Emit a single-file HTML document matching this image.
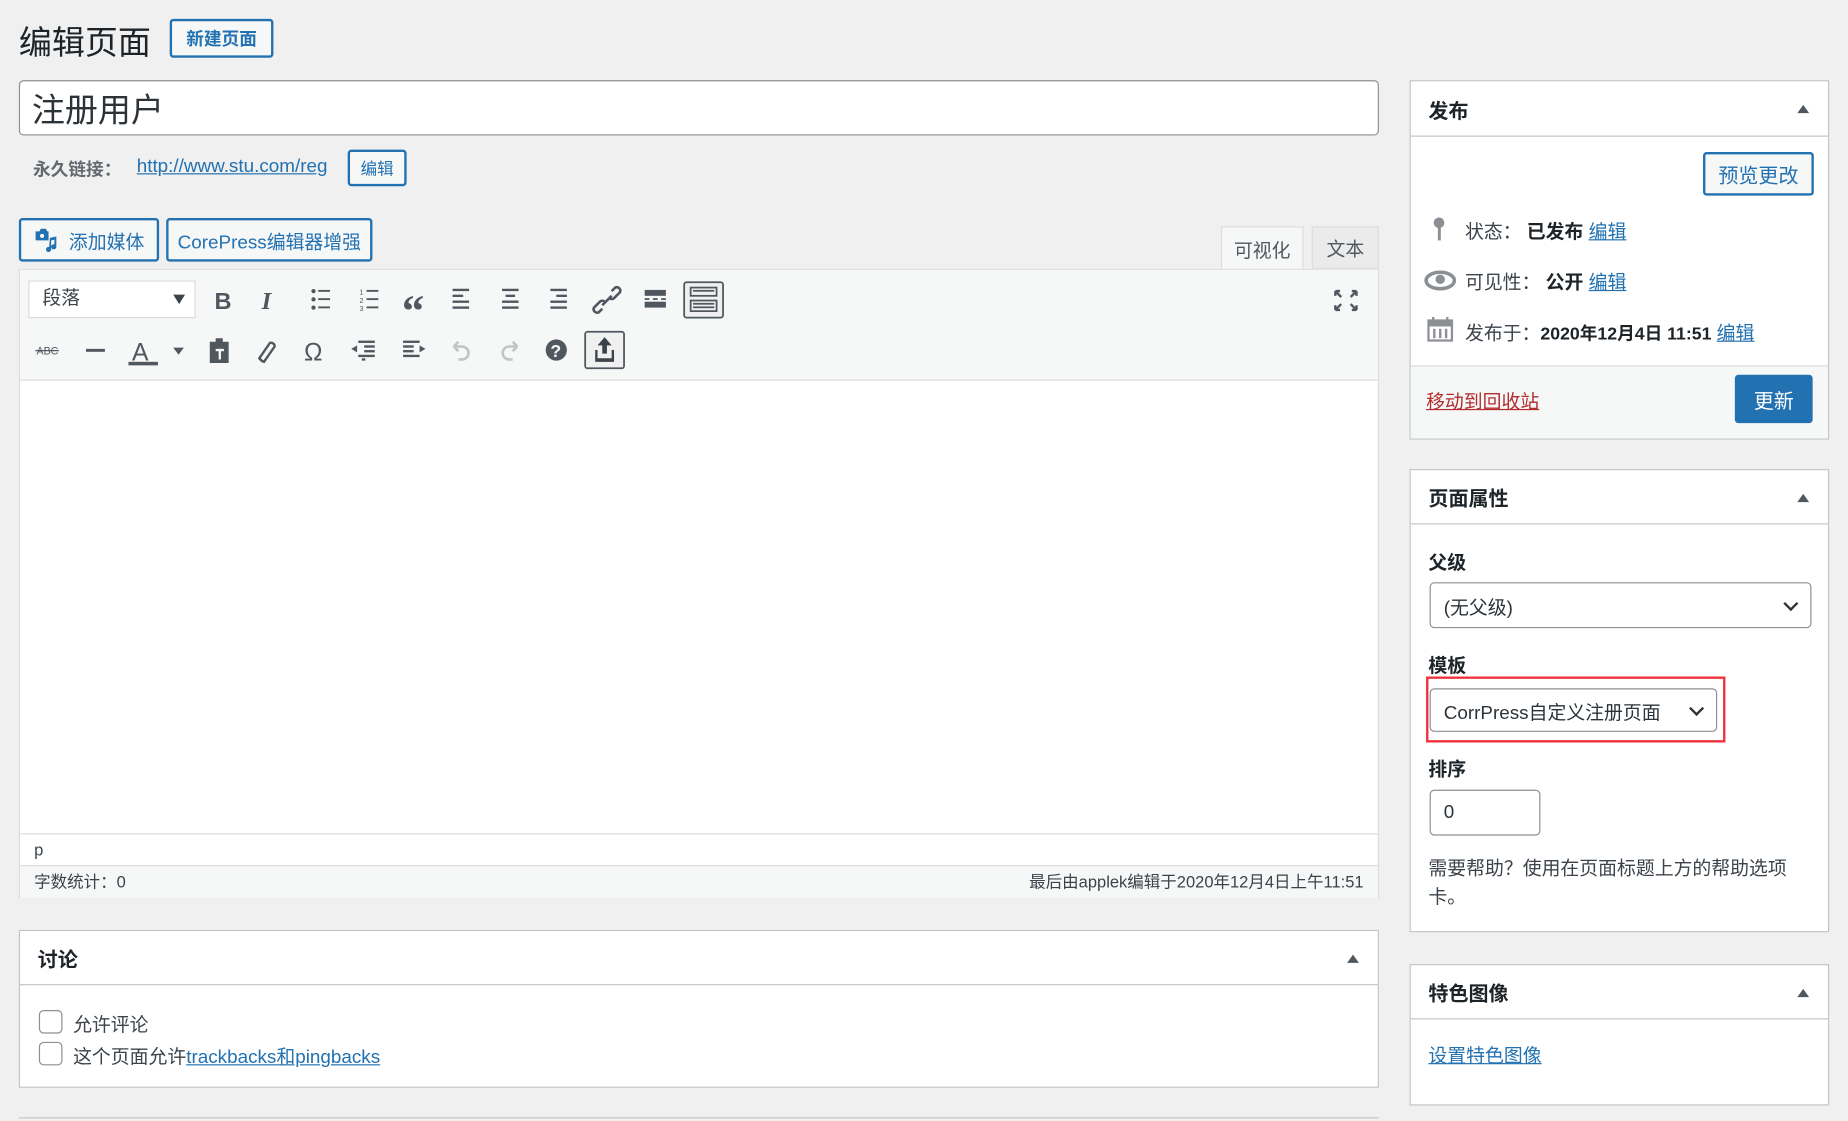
<!DOCTYPE html>
<html><head><meta charset="utf-8"><style>
*{box-sizing:border-box;margin:0;padding:0}
html,body{width:1848px;height:1120px;overflow:hidden;background:#f0f0f1}
#w{position:absolute;left:0;top:0;width:1568px;height:951px;transform:scale(1.17857);transform-origin:0 0;font-family:"Liberation Sans","Noto Sans CJK SC",sans-serif;color:#3c434a;font-size:16px}
.a{position:absolute}
.btn{position:absolute;border:2px solid #2271b1;border-radius:3px;color:#2271b1;background:#f6f7f7;display:flex;align-items:center;justify-content:center;font-size:16px}
.box{position:absolute;background:#fff;border:1px solid #c3c4c7}
.hd{position:absolute;left:0;right:0;top:0;border-bottom:1px solid #c3c4c7;font-weight:bold;font-size:17px;color:#1d2327;padding-left:15px;display:flex;align-items:center}
.tri{position:absolute;right:16px;width:0;height:0;border-left:5px solid transparent;border-right:5px solid transparent;border-bottom:7px solid #50575e}
a,.lk{color:#2271b1;text-decoration:underline}
.sel{position:absolute;border:1px solid #8c8f94;border-radius:4px;background:#fff;font-size:16px;color:#2c3338;display:flex;align-items:center;padding-left:11px}
.chev{position:absolute;right:12px;top:50%;width:9px;height:9px;border-right:2px solid #2c3338;border-bottom:2px solid #2c3338;transform:translateY(-70%) rotate(45deg)}
.cb{position:absolute;width:20px;height:20px;border:1.5px solid #8c8f94;border-radius:4px;background:#fff}
</style></head><body><div id="w">

<div class="a" style="left:16px;top:15px;font-size:28px;color:#1d2327">编辑页面</div>
<div class="btn" style="left:144px;top:16px;width:88px;height:33px;font-weight:bold;font-size:15px;color:#2271b1">新建页面</div>

<div class="a" style="left:16px;top:68px;width:1154px;height:47px;background:#fff;border:1px solid #8c8f94;border-radius:4px;font-size:28px;color:#2c3338;padding-left:10px;line-height:50px">注册用户</div>

<div class="a" style="left:28px;top:133px;font-weight:bold;font-size:15px;color:#646970">永久链接：</div>
<a class="a" style="left:116px;top:133px;font-size:16px">http://www.stu.com/reg</a>
<div class="btn" style="left:295px;top:127px;width:50px;height:31px;font-size:14px">编辑</div>

<div class="btn" style="left:16px;top:185px;width:119px;height:37px">
<svg width="22" height="22" viewBox="0 0 20 20" style="margin-right:8px"><path fill="#2271b1" d="M2 3h3l1-2h4l1 2h1v7H2z"/><path fill="#2271b1" d="M13 8l5-1v8a2 2 0 1 1-1.5-2V9.5L14 10v7a2 2 0 1 1-1.5-2z" /><circle cx="7" cy="6.5" r="1.6" fill="#f6f7f7"/></svg>添加媒体</div>
<div class="btn" style="left:141px;top:185px;width:175px;height:37px">CorePress编辑器增强</div>

<div class="a" style="left:1036px;top:192px;width:70px;height:37px;background:#f6f7f7;border:1px solid #dcdcde;border-bottom:none;display:flex;align-items:center;justify-content:center;color:#50575e">可视化</div>
<div class="a" style="left:1113px;top:192px;width:57px;height:36px;background:#ebebeb;border:1px solid #dcdcde;display:flex;align-items:center;justify-content:center;color:#50575e">文本</div>

<div class="a" style="left:16px;top:228px;width:1154px;height:534px;border:1px solid #dcdcde;background:#fff;box-shadow:0 1px 1px rgba(0,0,0,.04)">
 <div class="a" style="left:0;top:0;right:0;height:94px;background:#f6f7f7;border-bottom:1px solid #dcdcde"></div>
 <div class="a" style="left:0;top:478px;right:0;height:27px;border-top:1px solid #dcdcde;padding-left:12px;font-size:14px;line-height:26px;color:#3c434a">p</div>
 <div class="a" style="left:0;top:505px;right:0;height:28px;background:#f6f7f7;border-top:1px solid #dcdcde;font-size:14px;line-height:26px;padding:0 12px;color:#3c434a"><span>字数统计：0</span><span style="float:right">最后由applek编辑于2020年12月4日上午11:51</span></div>
</div>

<div class="a" style="left:24px;top:238px;width:142px;height:32px;background:#fff;border:1px solid #dcdcde;font-size:16px;line-height:30px;padding-left:11px;color:#3c434a">段落<span style="position:absolute;right:8px;top:11px;border-left:5px solid transparent;border-right:5px solid transparent;border-top:8px solid #3c434a"></span></div>
<svg class="a" style="left:0;top:0" width="1180" height="330">
<g fill="#50575e" stroke="none" font-family="Liberation Sans">
<text x="182" y="262" font-weight="bold" font-size="20">B</text>
<text x="222" y="262" font-style="italic" font-weight="bold" font-size="21" font-family="Liberation Serif">I</text>
<circle cx="266" cy="247" r="1.8"/><circle cx="266" cy="254" r="1.8"/><circle cx="266" cy="261" r="1.8"/>
<rect x="270" y="246" width="10" height="1.6"/><rect x="270" y="253" width="10" height="1.6"/><rect x="270" y="260" width="10" height="1.6"/>
<text x="305" y="250" font-size="6">1</text><text x="305" y="257" font-size="6">2</text><text x="305" y="264" font-size="6">3</text>
<rect x="311" y="246" width="10" height="1.6"/><rect x="311" y="253" width="10" height="1.6"/><rect x="311" y="260" width="10" height="1.6"/>
<text x="341" y="276" font-size="38" font-weight="bold" font-family="Liberation Serif">“</text>
<rect x="384" y="245" width="14" height="2"/><rect x="384" y="250" width="9" height="2"/><rect x="384" y="255" width="14" height="2"/><rect x="384" y="260" width="14" height="2"/>
<rect x="426" y="245" width="14" height="2"/><rect x="429" y="250" width="8" height="2"/><rect x="426" y="255" width="14" height="2"/><rect x="426" y="260" width="14" height="2"/>
<rect x="467" y="245" width="14" height="2"/><rect x="472" y="250" width="9" height="2"/><rect x="467" y="255" width="14" height="2"/><rect x="467" y="260" width="14" height="2"/>
<rect x="547" y="246" width="18" height="5"/><rect x="547" y="253" width="4" height="1.5"/><rect x="554" y="253" width="4" height="1.5"/><rect x="561" y="253" width="4" height="1.5"/><rect x="547" y="256" width="18" height="5"/>
</g>
<g fill="none" stroke="#50575e" stroke-width="2.2"><path d="M511 262l-3 3a3 3 0 0 1-4-4l5-5a3 3 0 0 1 4 0M519 247l3-3a3 3 0 0 1 4 4l-5 5a3 3 0 0 1-4 0M511 259l8-8"/></g>
<rect x="580.5" y="239.5" width="33" height="30" rx="2" fill="#f0f0f1" stroke="#50575e" stroke-width="1.5"/>
<rect x="586" y="244" width="22" height="7" fill="none" stroke="#50575e" stroke-width="1.5"/><rect x="586" y="255" width="22" height="9" fill="none" stroke="#50575e" stroke-width="1.5"/>
<g fill="#50575e"><rect x="588" y="246" width="18" height="1.5"/><rect x="588" y="257" width="18" height="1.5"/><rect x="588" y="260" width="18" height="1.5"/></g>
<g fill="none" stroke="#50575e" stroke-width="2"><path d="M1133 247l5 5M1133 247h4M1133 247v4M1151 247l-5 5M1151 247h-4M1151 247v4M1133 263l5-5M1133 263h4M1133 263v-4M1151 263l-5-5M1151 263h-4M1151 263v-4"/></g>
<g fill="#50575e" font-family="Liberation Sans">
<text x="31" y="301" font-size="9">ABC</text><rect x="30" y="297" width="20" height="1"/>
<rect x="73" y="296" width="16" height="2.5"/>
<text x="112" y="306" font-size="21">A</text><rect x="109" y="307" width="25" height="3"/>
<path d="M147 295h9l-4.5 6z"/>
<path d="M178 290h5v-3h6v3h5v18h-16z"/><rect x="183" y="296" width="7" height="2" fill="#f6f7f7"/><rect x="185.5" y="296" width="2" height="9" fill="#f6f7f7"/>
<text x="258" y="306" font-size="21">Ω</text>
<circle cx="472" cy="297" r="9"/>
</g>
<text x="467" y="303" font-size="15" font-weight="bold" fill="#f6f7f7" font-family="Liberation Sans">?</text>
<g fill="none" stroke="#50575e" stroke-width="2"><path d="M222 306l-2-2 9-13a3 3 0 0 1 4 3l-9 13z"/><path d="M220 304l3 3"/></g>
<g fill="#50575e"><rect x="304" y="289" width="14" height="2"/><rect x="309" y="293" width="9" height="2"/><rect x="309" y="297" width="9" height="2"/><rect x="304" y="301" width="14" height="2"/><rect x="307" y="304" width="3" height="2"/><path d="M298 296l5-3v6z"/>
<rect x="342" y="289" width="14" height="2"/><rect x="342" y="293" width="9" height="2"/><rect x="342" y="297" width="9" height="2"/><rect x="342" y="301" width="14" height="2"/><path d="M361 296l-5-3v6z"/></g>
<g fill="none" stroke="#c3c4c7" stroke-width="2.2"><path d="M385 294h7a5 5 0 0 1 0 11h-3M385 294l4-4M385 294l4 4"/><path d="M439 294h-7a5 5 0 0 0 0 11h3M439 294l-4-4M439 294l-4 4"/></g>
<rect x="496.5" y="281.5" width="33" height="31" rx="2" fill="#f0f0f1" stroke="#50575e" stroke-width="1.5"/>
<path d="M513 286l6 7h-4v7h-4v-7h-4z M505 297h2v7h12v-7h2v10h-16z" fill="#3c434a"/>
</svg>

<div class="box" style="left:16px;top:789px;width:1154px;height:134px">
 <div class="hd" style="height:46px">讨论<span class="tri" style="top:20px"></span></div>
 <div class="cb" style="left:16px;top:67px"></div><div class="a" style="left:45px;top:66px">允许评论</div>
 <div class="cb" style="left:16px;top:94px"></div><div class="a" style="left:45px;top:93px">这个页面允许<span class="lk">trackbacks和pingbacks</span></div>
</div>
<div class="a" style="left:16px;top:948px;width:1154px;height:3px;border-top:1px solid #c3c4c7"></div>

<div class="box" style="left:1196px;top:68px;width:356px;height:305px">
 <div class="hd" style="height:47px">发布<span class="tri" style="top:20px"></span></div>
 <div class="btn" style="left:248px;top:60px;width:94px;height:37px;font-size:17px">预览更改</div>
 <svg class="a" style="left:15px;top:114px" width="18" height="24"><circle cx="9" cy="6" r="4.5" fill="#8c8f94"/><rect x="8" y="8" width="2.5" height="13" fill="#8c8f94"/></svg>
 <div class="a" style="left:46px;top:114px">状态：&nbsp;<b style="color:#1d2327">已发布</b> <span class="lk">编辑</span></div>
 <svg class="a" style="left:11px;top:158px" width="28" height="22"><ellipse cx="14" cy="11" rx="12" ry="7" fill="none" stroke="#8c8f94" stroke-width="3"/><circle cx="14" cy="10" r="4" fill="#8c8f94"/></svg>
 <div class="a" style="left:46px;top:157px">可见性：&nbsp;<b style="color:#1d2327">公开</b> <span class="lk">编辑</span></div>
 <svg class="a" style="left:14px;top:199px" width="22" height="22"><rect x="1" y="4" width="20" height="17" fill="none" stroke="#8c8f94" stroke-width="2"/><rect x="1" y="4" width="20" height="5" fill="#8c8f94"/><rect x="4" y="1" width="2" height="5" fill="#8c8f94"/><rect x="16" y="1" width="2" height="5" fill="#8c8f94"/><rect x="5" y="11" width="2" height="8" fill="#8c8f94"/><rect x="10" y="11" width="2" height="8" fill="#8c8f94"/><rect x="15" y="11" width="2" height="8" fill="#8c8f94"/></svg>
 <div class="a" style="left:46px;top:200px">发布于：<span style="color:#1d2327;font-weight:bold;font-size:15px">2020年12月4日 11:51</span> <span class="lk">编辑</span></div>
 <div class="a" style="left:0;right:0;top:241px;bottom:0;background:#f6f7f7;border-top:1px solid #dcdcde"></div>
 <div class="a" style="left:13px;top:258px;color:#b32d2e;text-decoration:underline">移动到回收站</div>
 <div class="a" style="left:275px;top:249px;width:66px;height:41px;background:#2271b1;border-radius:3px;color:#fff;font-size:17px;display:flex;align-items:center;justify-content:center">更新</div>
</div>

<div class="box" style="left:1196px;top:398px;width:356px;height:393px">
 <div class="hd" style="height:46px">页面属性<span class="tri" style="top:20px"></span></div>
 <div class="a" style="left:15px;top:65px;font-weight:bold;color:#1d2327">父级</div>
 <div class="sel" style="left:16px;top:95px;width:324px;height:39px">(无父级)<span class="chev"></span></div>
 <div class="a" style="left:15px;top:152px;font-weight:bold;color:#1d2327">模板</div>
 <div class="a" style="left:13px;top:175px;width:254px;height:56px;border:2.5px solid #f0303a"></div>
 <div class="sel" style="left:16px;top:185px;width:244px;height:37px">CorrPress自定义注册页面<span class="chev"></span></div>
 <div class="a" style="left:15px;top:240px;font-weight:bold;color:#1d2327">排序</div>
 <div class="sel" style="left:16px;top:271px;width:94px;height:39px">0</div>
 <div class="a" style="left:15px;top:327px;width:325px;line-height:24px">需要帮助？使用在页面标题上方的帮助选项卡。</div>
</div>

<div class="box" style="left:1196px;top:818px;width:356px;height:120px">
 <div class="hd" style="height:46px">特色图像<span class="tri" style="top:20px"></span></div>
 <div class="a lk" style="left:15px;top:63px">设置特色图像</div>
</div>

</div></body></html>
